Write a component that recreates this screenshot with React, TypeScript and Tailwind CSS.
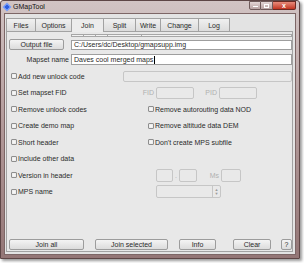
const tabs = [
  { label: "Files", w: "w-[30px]" },
  { label: "Options", w: "w-[37px]" },
  { label: "Join", w: "w-[33px]", active: true },
  { label: "Split", w: "w-[33px]" },
  { label: "Write", w: "w-[26px]" },
  { label: "Change", w: "w-[39px]" },
  { label: "Log", w: "w-[32px]" },
];

function Box() {
  return <span className="w-[6px] h-[6px] shrink-0 border border-[#8e8e8e] bg-[#f6f6f6] rounded-[1px] shadow-[inset_0_0_1px_#bbb]" />;
}

function Check({ label }: { label: string }) {
  return (
    <div className="flex items-center gap-[1px]">
      <Box />
      <span className="leading-none">{label}</span>
    </div>
  );
}

function Field({ className = "", children }: { className?: string; children?: React.ReactNode }) {
  return (
    <div className={`border border-[#c6c6c6] bg-[#e9e9e9] rounded-[2px] ${className}`}>{children}</div>
  );
}

function Btn({ label, w }: { label: string; w: string }) {
  return (
    <div
      className={`${w} h-[11px] flex items-center justify-center border border-[#9c9c9c] rounded-[2px] bg-gradient-to-b from-[#f4f4f4] to-[#dcdcdc] leading-none`}
    >
      {label}
    </div>
  );
}

export default function App() {
  return (
    <div className="w-[304px] h-[263px] bg-white overflow-hidden font-['Liberation_Sans',Arial,sans-serif] text-[7px] text-[#2a2a2a]">
      <div className="w-[300px] h-[259px] flex flex-col border border-[#5e4646] rounded-t-[3px] bg-gradient-to-b from-[#d2c4c4] via-[#b29999] to-[#947676] shadow-[2px_2px_3px_rgba(0,0,0,0.4)]">
        {/* title bar */}
        <div className="h-[12px] flex items-start shrink-0">
          <div className="flex items-center h-[11px] pl-[3px] gap-[3px]">
            <span className="w-[6px] h-[6px] rotate-45 bg-[#2c5de0] border border-[#8fb0ff]" />
            <span className="leading-none text-[#111]">GMapTool</span>
          </div>
          <div className="ml-auto mr-[3px] flex">
            <div className="w-[12px] h-[9px] border border-[#6f5a5a] rounded-bl-[2px] bg-gradient-to-b from-[#e4d6d6] to-[#b9a3a3] flex items-end justify-center pb-[2px]">
              <span className="w-[5px] h-[1px] bg-white" />
            </div>
            <div className="w-[12px] h-[9px] border-y border-r border-[#6f5a5a] bg-gradient-to-b from-[#e4d6d6] to-[#b9a3a3] flex items-center justify-center">
              <span className="w-[5px] h-[4px] border border-white" />
            </div>
            <div className="w-[23px] h-[9px] border-y border-r border-[#6b2a22] rounded-br-[2px] bg-gradient-to-b from-[#e88a7a] to-[#c1321f] flex items-center justify-center text-white font-bold leading-none">
              x
            </div>
          </div>
        </div>
        {/* client area */}
        <div className="flex-1 mx-[3px] mb-[3px] bg-[#e3e3e3] flex flex-col pt-[3px] pl-[1px] pr-[2px] pb-[2px] border border-[#7d6666]">
          <div className="flex h-[14px] items-end shrink-0">
            {tabs.map((t) => (
              <div
                key={t.label}
                className={`${t.w} flex items-center justify-center leading-none border-t border-x border-[#a2a2a2] -ml-px first:ml-0 ${
                  t.active
                    ? "h-[14px] bg-[#ececec] relative z-10 mb-[-1px] pb-[1px]"
                    : "h-[13px] bg-gradient-to-b from-[#f0f0f0] to-[#dcdcdc]"
                }`}
              >
                {t.label}
              </div>
            ))}
          </div>
          <div className="flex-1 border border-[#a2a2a2] bg-[#e8e8e8] flex flex-col">
            {/* ruler */}
            <div className="ml-[64px] mt-[2px] w-[221px] h-[3px] border border-[#a6a6a6] bg-[#f2f2f2] flex">
              <span className="w-[12px] border-r border-[#a6a6a6]" />
              <span className="w-[12px] border-r border-[#a6a6a6]" />
              <span className="w-[12px] border-r border-[#a6a6a6]" />
              <span className="w-[34px] border-r border-[#a6a6a6]" />
            </div>
            {/* output file */}
            <div className="flex mt-[2px] ml-[2px] items-center">
              <Btn label="Output file" w="w-[55px]" />
              <div className="ml-[7px] w-[221px] h-[10px] border border-[#9e9e9e] bg-white flex items-center px-[2px] leading-none">
                C:/Users/dc/Desktop/gmapsupp.img
              </div>
            </div>
            {/* mapset name */}
            <div className="flex mt-[4px] items-center">
              <span className="w-[62px] text-right leading-none">Mapset name</span>
              <div className="ml-[2px] w-[221px] h-[11px] border border-[#9e9e9e] bg-white flex items-center px-[2px] leading-none">
                Daves cool merged maps
                <span className="w-px h-[8px] bg-black ml-px" />
              </div>
            </div>
            {/* options */}
            <div className="mt-[3px] pl-[4px] flex flex-col">
              <div className="h-[16.5px] flex items-center">
                <div className="w-[112px]"><Check label="Add new unlock code" /></div>
                <Field className="w-[169px] h-[11px]" />
              </div>
              <div className="h-[16.5px] flex items-center">
                <div className="w-[130px]"><Check label="Set mapset FID" /></div>
                <span className="w-[13px] text-right text-[#b0b0b0] leading-none">FID</span>
                <Field className="ml-[2px] w-[38px] h-[12px]" />
                <span className="w-[25px] text-right pr-[2px] text-[#b0b0b0] leading-none">PID</span>
                <Field className="w-[38px] h-[12px]" />
              </div>
              <div className="h-[16.5px] flex items-center">
                <div className="w-[137px]"><Check label="Remove unlock codes" /></div>
                <Check label="Remove autorouting data NOD" />
              </div>
              <div className="h-[16.5px] flex items-center">
                <div className="w-[137px]"><Check label="Create demo map" /></div>
                <Check label="Remove altitude data DEM" />
              </div>
              <div className="h-[16.5px] flex items-center">
                <div className="w-[137px]"><Check label="Short header" /></div>
                <Check label="Don't create MPS subfile" />
              </div>
              <div className="h-[16.5px] flex items-center">
                <Check label="Include other data" />
              </div>
              <div className="h-[16.5px] flex items-center">
                <div className="w-[145px]"><Check label="Version in header" /></div>
                <Field className="w-[17px] h-[13px]" />
                <span className="w-[6px] text-center text-[#b0b0b0] leading-none">.</span>
                <Field className="w-[18px] h-[13px]" />
                <span className="w-[24px] text-right pr-[2px] text-[#b0b0b0] leading-none">Ms</span>
                <Field className="w-[20px] h-[13px]" />
              </div>
              <div className="h-[16.5px] flex items-center">
                <div className="w-[145px]"><Check label="MPS name" /></div>
                <Field className="w-[65px] h-[13px] flex justify-end">
                  <div className="w-[8px] border-l border-[#c6c6c6] flex flex-col items-center justify-center text-[4px] leading-[4px] text-[#9a9a9a]">
                    <span>▲</span>
                    <span>▼</span>
                  </div>
                </Field>
              </div>
            </div>
            {/* bottom buttons */}
            <div className="mt-auto mb-[1px] ml-[2px] flex items-center">
              <Btn label="Join all" w="w-[75px]" />
              <div className="ml-[11px]"><Btn label="Join selected" w="w-[73px]" /></div>
              <div className="ml-[11px]"><Btn label="Info" w="w-[37px]" /></div>
              <div className="ml-[17px]"><Btn label="Clear" w="w-[38px]" /></div>
              <div className="ml-[10px]"><Btn label="?" w="w-[11px]" /></div>
            </div>
          </div>
        </div>
      </div>
    </div>
  );
}
